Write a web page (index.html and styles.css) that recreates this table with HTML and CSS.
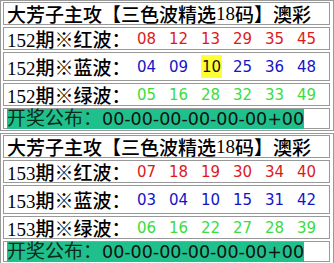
FILE: index.html
```html
<!DOCTYPE html>
<html>
<head>
<meta charset="utf-8">
<link rel="stylesheet" href="styles.css">
</head>
<body>
<div class="block">
  <div class="cell head">大芳子主攻【三色波精选<span class="d">18</span>码】澳彩</div>
  <div class="cell row"><span class="label"><span class="d">152</span>期※红波：</span><span class="nums red"><span>08</span><span>12</span><span>13</span><span>29</span><span>35</span><span>45</span></span></div>
  <div class="cell row tall"><span class="label"><span class="d">152</span>期※蓝波：</span><span class="nums blue"><span>04</span><span>09</span><span><b class="hl">10</b></span><span>25</span><span>36</span><span>48</span></span></div>
  <div class="cell row"><span class="label"><span class="d">152</span>期※绿波：</span><span class="nums green"><span>05</span><span>16</span><span>28</span><span>32</span><span>33</span><span>49</span></span></div>
  <div class="cell res"><span class="mark">开奖公布：<span class="rn">00-00-00-00-00-00+00</span></span></div>
</div>
<div class="block">
  <div class="cell head">大芳子主攻【三色波精选<span class="d">18</span>码】澳彩</div>
  <div class="cell row"><span class="label"><span class="d">153</span>期※红波：</span><span class="nums red"><span>07</span><span>18</span><span>19</span><span>30</span><span>34</span><span>40</span></span></div>
  <div class="cell row tall"><span class="label"><span class="d">153</span>期※蓝波：</span><span class="nums blue"><span>03</span><span>04</span><span>10</span><span>15</span><span>31</span><span>42</span></span></div>
  <div class="cell row"><span class="label"><span class="d">153</span>期※绿波：</span><span class="nums green"><span>06</span><span>16</span><span>22</span><span>27</span><span>28</span><span>39</span></span></div>
  <div class="cell res"><span class="mark">开奖公布：<span class="rn">00-00-00-00-00-00+00</span></span></div>
</div>
</body>
</html>
```
FILE: styles.css
```css
html, body { margin: 0; padding: 0; background: #fff; }
body { font-family: "Liberation Serif", "Noto Sans CJK SC", serif; color: #000; }
.block {
  border: 1px solid #999;
  padding: 1px 3px 1px 2px;
  margin: 0 0 2px 0;
  display: flex;
  flex-direction: column;
  gap: 2px;
}
.cell {
  border: 1px solid #999;
  padding: 0 0 0 3px;
  display: flex;
  align-items: center;
  font-size: 19px;
  white-space: nowrap;
}
.head { height: 21px; font-weight: 500; }
.row { height: 21px; }
.row.tall { height: 27px; }
.res { height: 19px; }
.d { font-size: 19px; }
.label { width: 135px; display: inline-block; font-weight: 500; }
.nums { display: flex; font-family: "DejaVu Sans", sans-serif; font-size: 15px; }
.nums > span { width: 32px; }
.red { color: #dd1a1a; }
.blue { color: #1414c8; }
.green { color: #3cdc3c; }
.hl { font-weight: normal; background: #ffff33; color: #111; padding: 3px 1px 2px; }
.mark { background: #1fc08c; color: #0a2a1a; line-height: 19px; }
.rn { font-family: "DejaVu Sans", sans-serif; font-size: 17.5px; color: #111; }
```
